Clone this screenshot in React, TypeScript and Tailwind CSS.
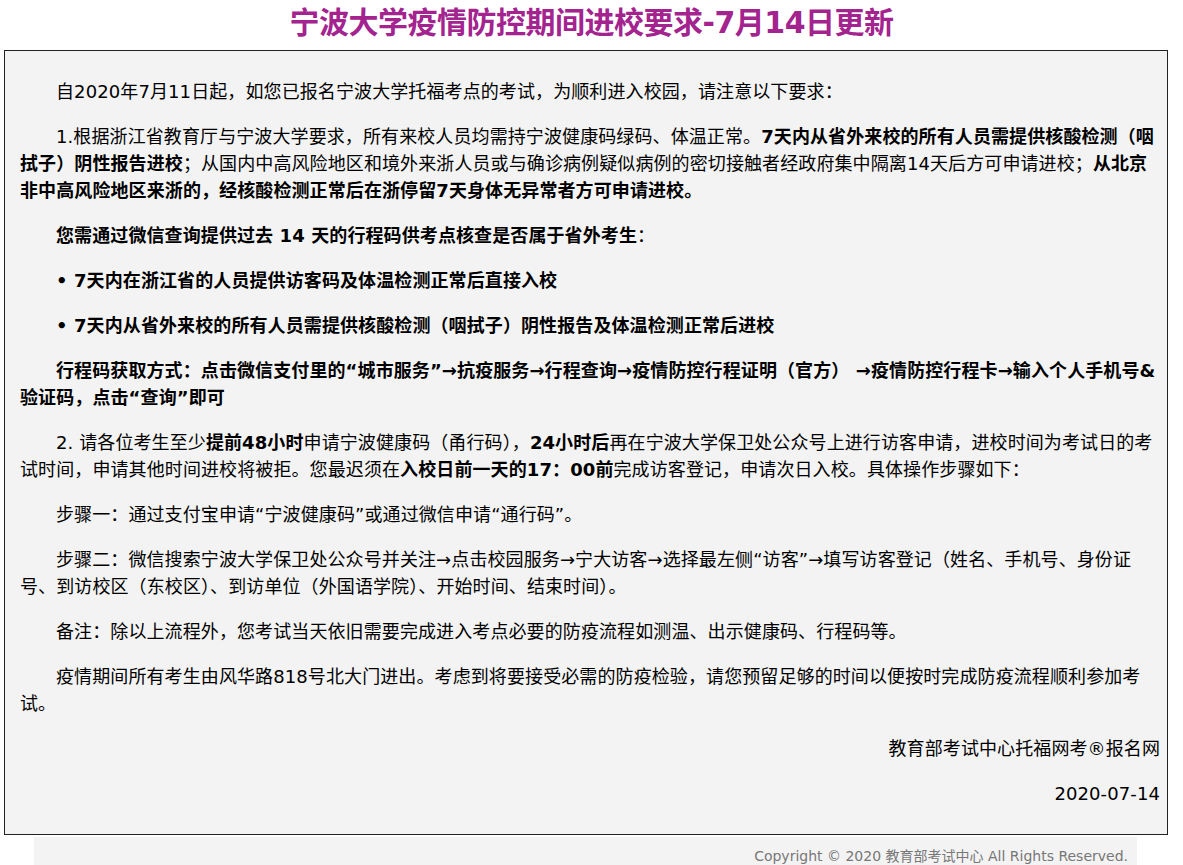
const font = { fontFamily: '"DejaVu Sans", "Noto Sans CJK SC", sans-serif' };

export default function App() {
  const p = "indent-[36px] mb-[18px]";
  return (
    <div className="bg-white w-[1183px] h-[865px] overflow-hidden text-black" style={font}>
      <h1 className="text-center text-[30px] font-bold text-[#a3238f] leading-[44px] pt-[1px] pb-[5px] tracking-[-0.5px]">
        宁波大学疫情防控期间进校要求-7月14日更新
      </h1>
      <div className="mx-[4px] w-[1164px] border border-[#222] bg-[#f3f3f3] pl-[15px] pr-[7px] pt-[27px] pb-[9px] text-[18px] leading-[27px] tracking-[0.1px]">
        <p className={p}>自2020年7月11日起，如您已报名宁波大学托福考点的考试，为顺利进入校园，请注意以下要求：</p>
        <p className={p}>
          1.根据浙江省教育厅与宁波大学要求，所有来校人员均需持宁波健康码绿码、体温正常。
          <b>7天内从省外来校的所有人员需提供核酸检测（咽拭子）阴性报告进校</b>；从国内中高风险地区和境外来浙人员或与确诊病例疑似病例的密切接触者经政府集中隔离14天后方可申请进校；
          <b>从北京非中高风险地区来浙的，经核酸检测正常后在浙停留7天身体无异常者方可申请进校。</b>
        </p>
        <p className={p}><b>您需通过微信查询提供过去 14 天的行程码供考点核查是否属于省外考生</b>：</p>
        <p className={p}><b>• 7天内在浙江省的人员提供访客码及体温检测正常后直接入校</b></p>
        <p className={p}><b>• 7天内从省外来校的所有人员需提供核酸检测（咽拭子）阴性报告及体温检测正常后进校</b></p>
        <p className={p}><b>行程码获取方式：点击微信支付里的“城市服务”→抗疫服务→行程查询→疫情防控行程证明（官方） →疫情防控行程卡→输入个人手机号&amp;验证码，点击“查询”即可</b></p>
        <p className={p}>
          2. 请各位考生至少<b>提前48小时</b>申请宁波健康码（甬行码），<b>24小时后</b>再在宁波大学保卫处公众号上进行访客申请，进校时间为考试日的考试时间，申请其他时间进校将被拒。您最迟须在<b>入校日前一天的17：00前</b>完成访客登记，申请次日入校。具体操作步骤如下：
        </p>
        <p className={p}>步骤一：通过支付宝申请“宁波健康码”或通过微信申请“通行码”。</p>
        <p className={p}>步骤二：微信搜索宁波大学保卫处公众号并关注→点击校园服务→宁大访客→选择最左侧“访客”→填写访客登记（姓名、手机号、身份证号、到访校区（东校区）、到访单位（外国语学院）、开始时间、结束时间）。</p>
        <p className={p}>备注：除以上流程外，您考试当天依旧需要完成进入考点必要的防疫流程如测温、出示健康码、行程码等。</p>
        <p className={p}>疫情期间所有考生由风华路818号北大门进出。考虑到将要接受必需的防疫检验，请您预留足够的时间以便按时完成防疫流程顺利参加考试。</p>
        <p className="text-right mb-[18px]">教育部考试中心托福网考®报名网</p>
        <p className="text-right mb-[18px]">2020-07-14</p>
      </div>
      <div className="mx-[34px] mt-[2px] w-[1103px] h-[30px] bg-[#f3f3f3] text-right pr-[9px] pt-[9px] text-[14px] leading-[20px] text-[#777]">
        Copyright © 2020 教育部考试中心 All Rights Reserved.
      </div>
    </div>
  );
}
